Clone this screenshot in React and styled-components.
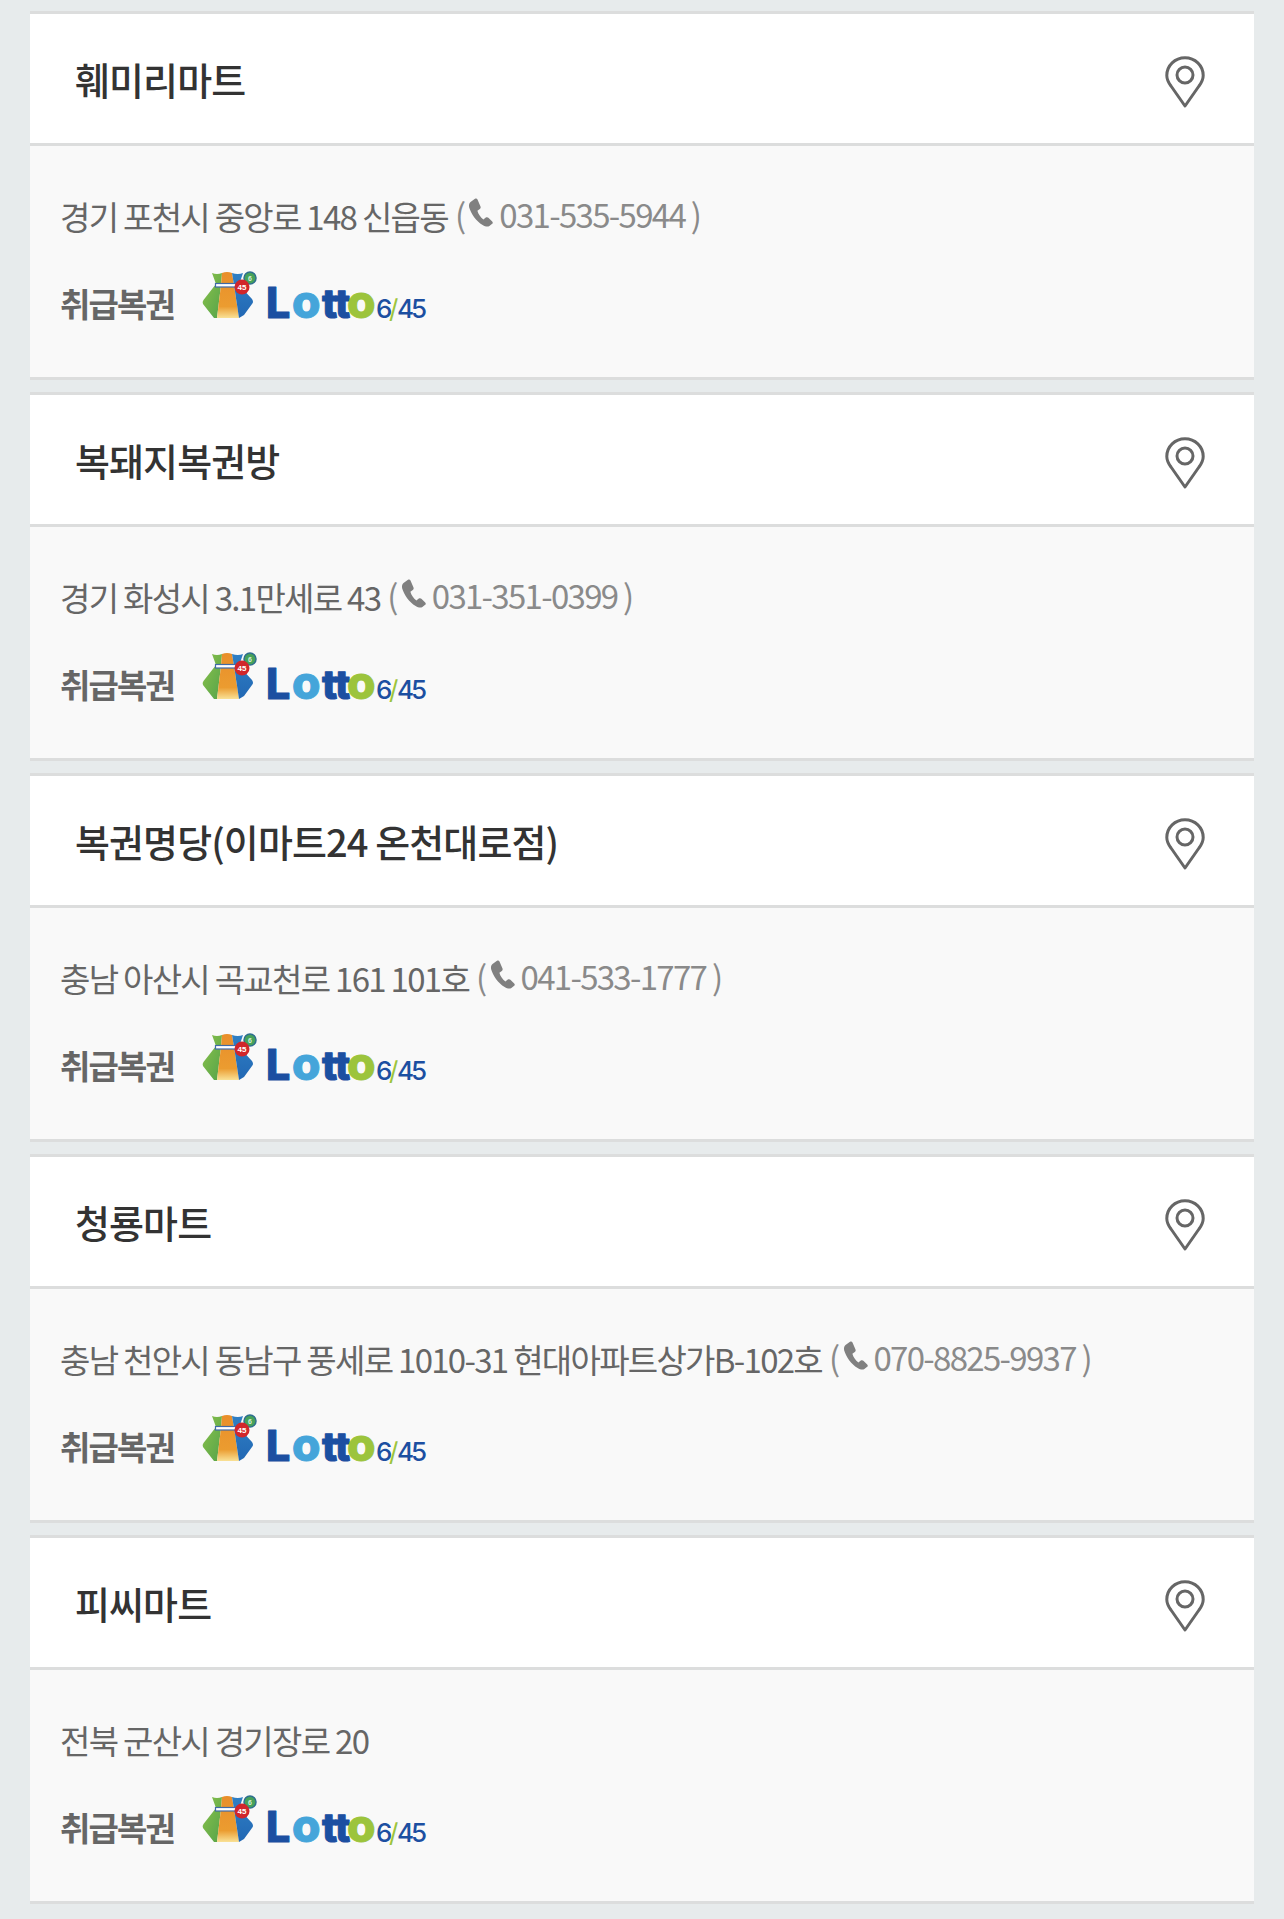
import React from "react"
import styled, { createGlobalStyle } from "styled-components"

const GlobalStyle = createGlobalStyle`
  html, body { margin: 0; padding: 0; background: #e7ebec; }
  body { font-family: "Noto Sans CJK KR", "Noto Sans", sans-serif; }
`

const Page = styled.div`
  height: 1919px;
  overflow: hidden;
  padding: 11px 30px 0;
  box-sizing: border-box;
`

const Card = styled.section`
  margin-bottom: 12px;
  border-top: 3px solid #dcdddd;
  border-bottom: 3px solid #dcdddd;
  background: #f9f9f9;
`

const Head = styled.div`
  height: 129px;
  padding: 0 46px 0 45px;
  background: #fff;
  border-bottom: 3px solid #dcdddd;
  display: flex;
  align-items: center;
  justify-content: space-between;
`

const Title = styled.h2`
  margin: 0;
  font-size: 38px;
  font-weight: 500;
  letter-spacing: -0.9px;
  color: #333;
`

const PinWrap = styled.div`
  width: 40px;
  height: 52px;
  margin: 6px 3px 0 0;
`

const Body = styled.div`
  height: 231px;
  padding: 0 30px;
  box-sizing: border-box;
`

const Address = styled.p`
  margin: 0;
  padding-top: 46px;
  height: 47px;
  line-height: 44px;
  font-size: 33px;
  letter-spacing: -1.7px;
  color: #666;
  white-space: nowrap;
  display: flex;
  align-items: center;
`

const Phone = styled.span`
  color: #8a8a8a;
  margin: 0 0 3px 7px;
  display: inline-flex;
  align-items: center;
`

const PhoneIcon = styled.svg`
  width: 25px;
  height: 29px;
  margin: 0 6px 4px 4px;
`

const Kinds = styled.div`
  margin-top: 31px;
  height: 60px;
  display: flex;
  align-items: center;
`

const KindLabel = styled.span`
  font-size: 33px;
  font-weight: 700;
  letter-spacing: -1.9px;
  color: #666;
  width: 142px;
  margin-top: 6px;
`

const LogoSvg = styled.svg`
  display: block;
  overflow: visible;
`

const Pin = () => (
  <PinWrap>
    <svg width="40" height="52" viewBox="0 0 40 52" fill="none" stroke="#666" strokeWidth="3">
      <path d="M20 50 L6 30 C3 26 1.8 23 1.8 19.5 C1.8 9.5 10 1.8 20 1.8 C30 1.8 38.2 9.5 38.2 19.5 C38.2 23 37 26 34 30 Z" strokeLinejoin="round" />
      <circle cx="20" cy="19" r="8" />
    </svg>
  </PinWrap>
)

const CallIcon = () => (
  <PhoneIcon viewBox="0 0 25 29">
    <path fill="#808080" d="M2.5 4 L7 .8 C8 .2 9 .5 9.5 1.5 L12.5 8.5 C12.9 9.5 12.6 10.4 11.8 11 L9.4 12.8 C10.2 16 12.6 19.6 15.4 21.4 L17.8 19.6 C18.6 19 19.6 19 20.4 19.7 L24.2 23.4 C25 24.2 25 25.2 24.2 25.8 L21.4 28 C19.8 29 17.4 28.8 14.6 27 C8.2 23 3 15.6 1.2 9.4 C.6 7.2 1.2 5 2.5 4 Z" />
  </PhoneIcon>
)

const LottoLogo = () => (
  <LogoSvg width="225" height="60" viewBox="0 0 225 60">
    <defs>
      <linearGradient id="lottoMid" x1="0" y1="0" x2="0" y2="1">
        <stop offset="0" stopColor="#e98e2a" />
        <stop offset="0.75" stopColor="#eb9c30" />
        <stop offset="1" stopColor="#f9e196" />
      </linearGradient>
      <linearGradient id="lottoLeft" x1="0" y1="0" x2="1" y2="1">
        <stop offset="0" stopColor="#8cc24a" />
        <stop offset="1" stopColor="#55a34a" />
      </linearGradient>
      <linearGradient id="lottoRight" x1="0" y1="0" x2="0" y2="1">
        <stop offset="0" stopColor="#2f7fc4" />
        <stop offset="1" stopColor="#2268b4" />
      </linearGradient>
    </defs>
    <path d="M10 3 Q15 5 20 3 L19 15 L15 48 L12 48 L1 34 Q0 32 1.5 30 L14 14 Z" fill="url(#lottoLeft)" />
    <path d="M20 3 Q25 1 30 3 L32 15 L37 48 L15 48 L19 15 Z" fill="url(#lottoMid)" />
    <path d="M30 3 Q36 5 41 3 L37 15 L50 29 Q52 32 50 34 L42 45 L37 48 L32 15 Z" fill="url(#lottoRight)" />
    <rect x="13.5" y="13.5" width="22" height="3.5" fill="#fff" stroke="#3f6aa8" strokeWidth="1.2" />
    <circle cx="48" cy="8" r="6" fill="#46a25a" stroke="#2e6f8e" strokeWidth="1.5" />
    <circle cx="40" cy="17" r="7.5" fill="#d1262b" />
    <text x="40" y="20" fontSize="8" fontWeight="700" fill="#fff" textAnchor="middle" fontFamily="Liberation Sans, sans-serif">45</text>
    <text x="48" y="11" fontSize="7" fontWeight="700" fill="#d6efd6" textAnchor="middle" fontFamily="Liberation Sans, sans-serif">6</text>
    <text y="48" fontFamily="Inter, sans-serif" fontWeight="800" strokeLinejoin="round" strokeWidth="1">
      <tspan x="64" fontSize="43" fill="#1c4fa1" stroke="#1c4fa1">L</tspan>
      <tspan x="90" fontSize="46" fill="#45a5da" stroke="#45a5da">o</tspan>
      <tspan x="120" fontSize="40" fill="#1c4fa1" stroke="#1c4fa1">t</tspan>
      <tspan x="133" fontSize="40" fill="#1c4fa1" stroke="#1c4fa1">t</tspan>
      <tspan x="145" fontSize="46" fill="#9cc43c" stroke="#9cc43c">o</tspan>
    </text>
    <text y="48" fontFamily="Inter, sans-serif" fontSize="26" fontWeight="500">
      <tspan x="174" fill="#1c4fa1">6</tspan>
      <tspan x="187" fontWeight="400" fill="#9cc43c">/</tspan>
      <tspan x="195" fill="#1c4fa1">4</tspan>
      <tspan x="209" fill="#1c4fa1">5</tspan>
    </text>
  </LogoSvg>
)

const shops = [
  { name: "훼미리마트", address: "경기 포천시 중앙로 148 신읍동", phone: "031-535-5944" },
  { name: "복돼지복권방", address: "경기 화성시 3.1만세로 43", phone: "031-351-0399" },
  { name: "복권명당(이마트24 온천대로점)", address: "충남 아산시 곡교천로 161 101호", phone: "041-533-1777" },
  { name: "청룡마트", address: "충남 천안시 동남구 풍세로 1010-31 현대아파트상가B-102호", phone: "070-8825-9937" },
  { name: "피씨마트", address: "전북 군산시 경기장로 20" },
]

const App = () => {
  return (
    <>
      <GlobalStyle />
      <Page>
        {shops.map((shop) => (
          <Card key={shop.name}>
            <Head>
              <Title>{shop.name}</Title>
              <Pin />
            </Head>
            <Body>
              <Address>
                {shop.address}
                {shop.phone && (
                  <Phone>
                    ( <CallIcon /> {shop.phone} )
                  </Phone>
                )}
              </Address>
              <Kinds>
                <KindLabel>취급복권</KindLabel>
                <LottoLogo />
              </Kinds>
            </Body>
          </Card>
        ))}
      </Page>
    </>
  )
}

export default App
